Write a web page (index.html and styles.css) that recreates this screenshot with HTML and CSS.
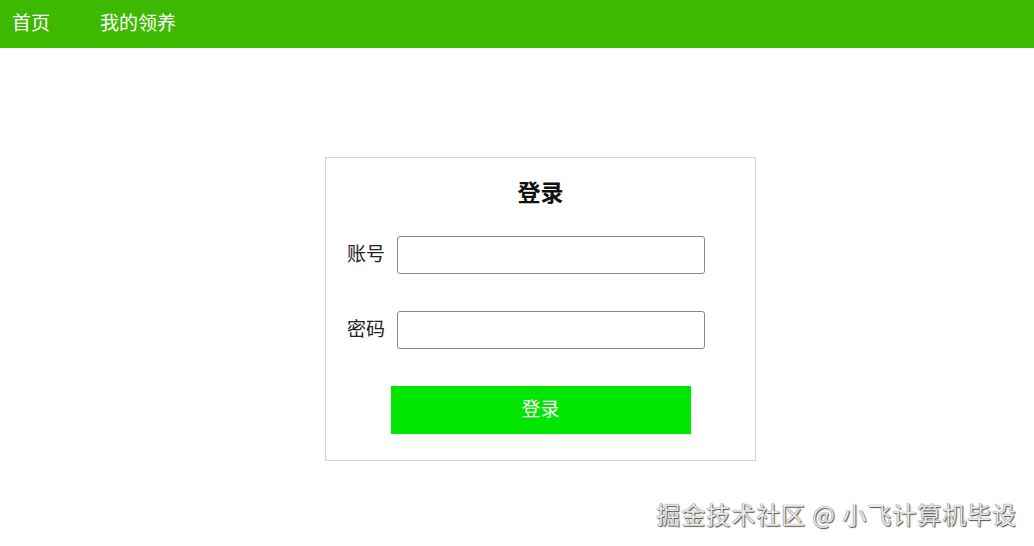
FILE: index.html
```html
<!DOCTYPE html>
<html lang="zh">
<head>
<meta charset="utf-8">
<title>登录</title>
<link rel="stylesheet" href="styles.css">
</head>
<body>
<nav class="nav">
  <a class="nav-item" href="#">首页</a>
  <a class="nav-item" href="#">我的领养</a>
</nav>
<main class="main">
  <form class="card">
    <h2 class="title">登录</h2>
    <div class="row">
      <label class="label">账号</label>
      <input class="input" type="text">
    </div>
    <div class="row">
      <label class="label">密码</label>
      <input class="input" type="password">
    </div>
    <button class="btn" type="button">登录</button>
  </form>
</main>
<div class="watermark">掘金技术社区 @ 小飞计算机毕设</div>
</body>
</html>
```
FILE: styles.css
```css
html, body {
  margin: 0;
  padding: 0;
  background: #fff;
  font-family: "Noto Sans CJK SC", "Noto Sans", sans-serif;
}
.nav {
  height: 48px;
  background: #3cb900;
  display: flex;
  align-items: center;
  padding-left: 12px;
  gap: 50px;
}
.nav-item {
  color: #fff;
  text-decoration: none;
  font-size: 19px;
  line-height: 24px;
  margin-top: -4px;
}
.main {
  padding: 109px 0 0 325px;
}
.card {
  box-sizing: border-box;
  width: 431px;
  height: 304px;
  border: 1px solid #d4d4d4;
  display: flex;
  flex-direction: column;
  padding: 17px 0 0 0;
}
.title {
  margin: 0;
  text-align: center;
  font-size: 23px;
  line-height: 32px;
  font-weight: bold;
  color: #111;
}
.row {
  display: flex;
  align-items: center;
  padding-left: 21px;
  gap: 12px;
  margin-top: 37px;
}
.title + .row {
  margin-top: 29px;
}
.label {
  font-size: 19px;
  color: #222;
  width: 38px;
  text-align: right;
  line-height: 24px;
  margin-top: -4px;
}
.input {
  box-sizing: border-box;
  width: 308px;
  height: 38px;
  border: 1px solid #888;
  border-radius: 3px;
  margin: 0;
  padding: 0 8px;
  font-size: 16px;
}
.btn {
  align-self: center;
  margin-top: 37px;
  width: 300px;
  height: 48px;
  border: none;
  background: #00e600;
  color: #fff;
  font-family: inherit;
  font-size: 19px;
  line-height: 24px;
  padding: 0 0 5px 0;
}
.watermark {
  position: absolute;
  right: 17px;
  top: 498px;
  font-size: 24px;
  line-height: 32px;
  color: #e8e8e8;
  letter-spacing: 0.95px;
  text-shadow: 0 0 1px #444, 1px 1px 1px #555;
}
```
